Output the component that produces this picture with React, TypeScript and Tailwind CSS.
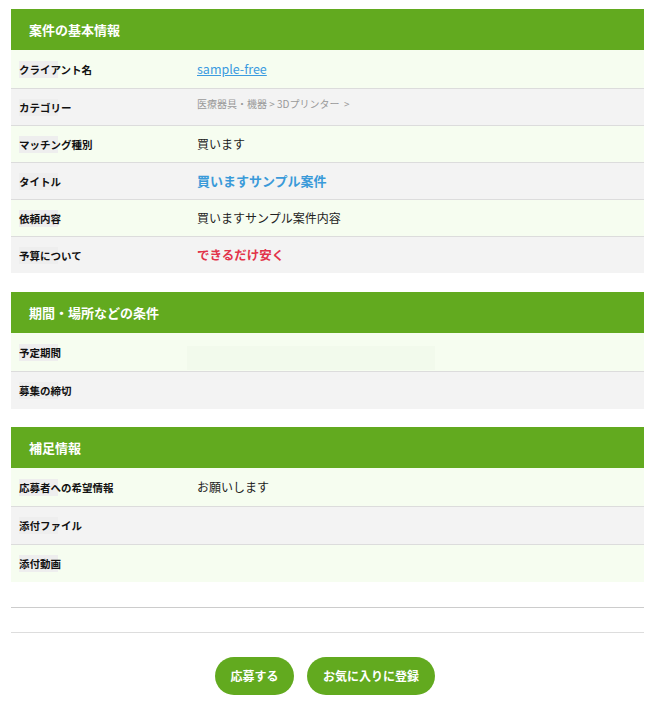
import type { ReactNode } from "react";

type Row = { label: string; value?: ReactNode };

const font = { fontFamily: '"Noto Sans CJK JP", "Noto Sans", sans-serif' };

function Section({ title, rows, tall }: { title: string; rows: Row[]; tall?: boolean }) {
  return (
    <section className="ml-[11px] mr-[13px]">
      <h2 className="h-[41px] bg-[#62aa1f] pl-[18px] flex items-center text-[13px] font-bold text-white">
        {title}
      </h2>
      {rows.map((r, i) => (
        <div
          key={r.label}
          className={`flex items-center ${tall || i === 0 ? "h-[38px]" : "h-[37px]"} ${
            i % 2 === 0 ? "bg-[#f6fdf0]" : "bg-[#f3f3f3]"
          } ${i === 0 ? "" : "border-t border-[#dcdcdc]"}`}
        >
          <div className="w-[186px] pl-2 shrink-0 flex items-center">
            <span className="inline-block w-[39px] h-[17px] leading-[17px] whitespace-nowrap bg-[#eeeeee] text-[10.5px] font-bold text-[#111]">
              {r.label}
            </span>
          </div>
          <div className="flex-1 text-[12px] text-[#222]">{r.value}</div>
        </div>
      ))}
    </section>
  );
}

export default function App() {
  return (
    <main className="w-[657px] min-h-[707px] bg-white pt-[9px]" style={font}>
      <Section
        title="案件の基本情報"
        rows={[
          {
            label: "クライアント名",
            value: <a className="text-[#3b9be0] underline text-[12.5px]">sample-free</a>,
          },
          {
            label: "カテゴリー",
            value: (
              <span className="block -mt-[8px] text-[10px] text-[#999]">
                医療器具・機器 &gt; 3Dプリンター &nbsp;&gt;
              </span>
            ),
          },
          { label: "マッチング種別", value: "買います" },
          {
            label: "タイトル",
            value: <span className="text-[13px] font-bold text-[#3a9ad9]">買いますサンプル案件</span>,
          },
          { label: "依頼内容", value: "買いますサンプル案件内容" },
          {
            label: "予算について",
            value: <span className="text-[12.5px] font-bold text-[#e2334a]">できるだけ安く</span>,
          },
        ]}
      />
      <div className="h-[19px]" />
      <Section
        tall
        title="期間・場所などの条件"
        rows={[
          {
            label: "予定期間",
            value: <div className="-ml-[10px] mt-[12px] w-[248px] h-[24px] bg-[#f2faec]" />,
          },
          { label: "募集の締切" },
        ]}
      />
      <div className="h-[18px]" />
      <Section
        tall
        title="補足情報"
        rows={[
          { label: "応募者への希望情報", value: "お願いします" },
          { label: "添付ファイル" },
          { label: "添付動画" },
        ]}
      />
      <div className="ml-[11px] mr-[13px] mt-[25px] border-t border-[#cccccc]" />
      <div className="ml-[11px] mr-[13px] mt-[24px] border-t border-[#dddddd]" />
      <div className="flex justify-center gap-[13px] mt-[24px] pr-[7px]">
        <button className="w-[79px] h-[38px] rounded-full bg-[#62aa1f] text-white text-[12px] font-bold">
          応募する
        </button>
        <button className="w-[128px] h-[38px] rounded-full bg-[#62aa1f] text-white text-[12px] font-bold">
          お気に入りに登録
        </button>
      </div>
    </main>
  );
}
